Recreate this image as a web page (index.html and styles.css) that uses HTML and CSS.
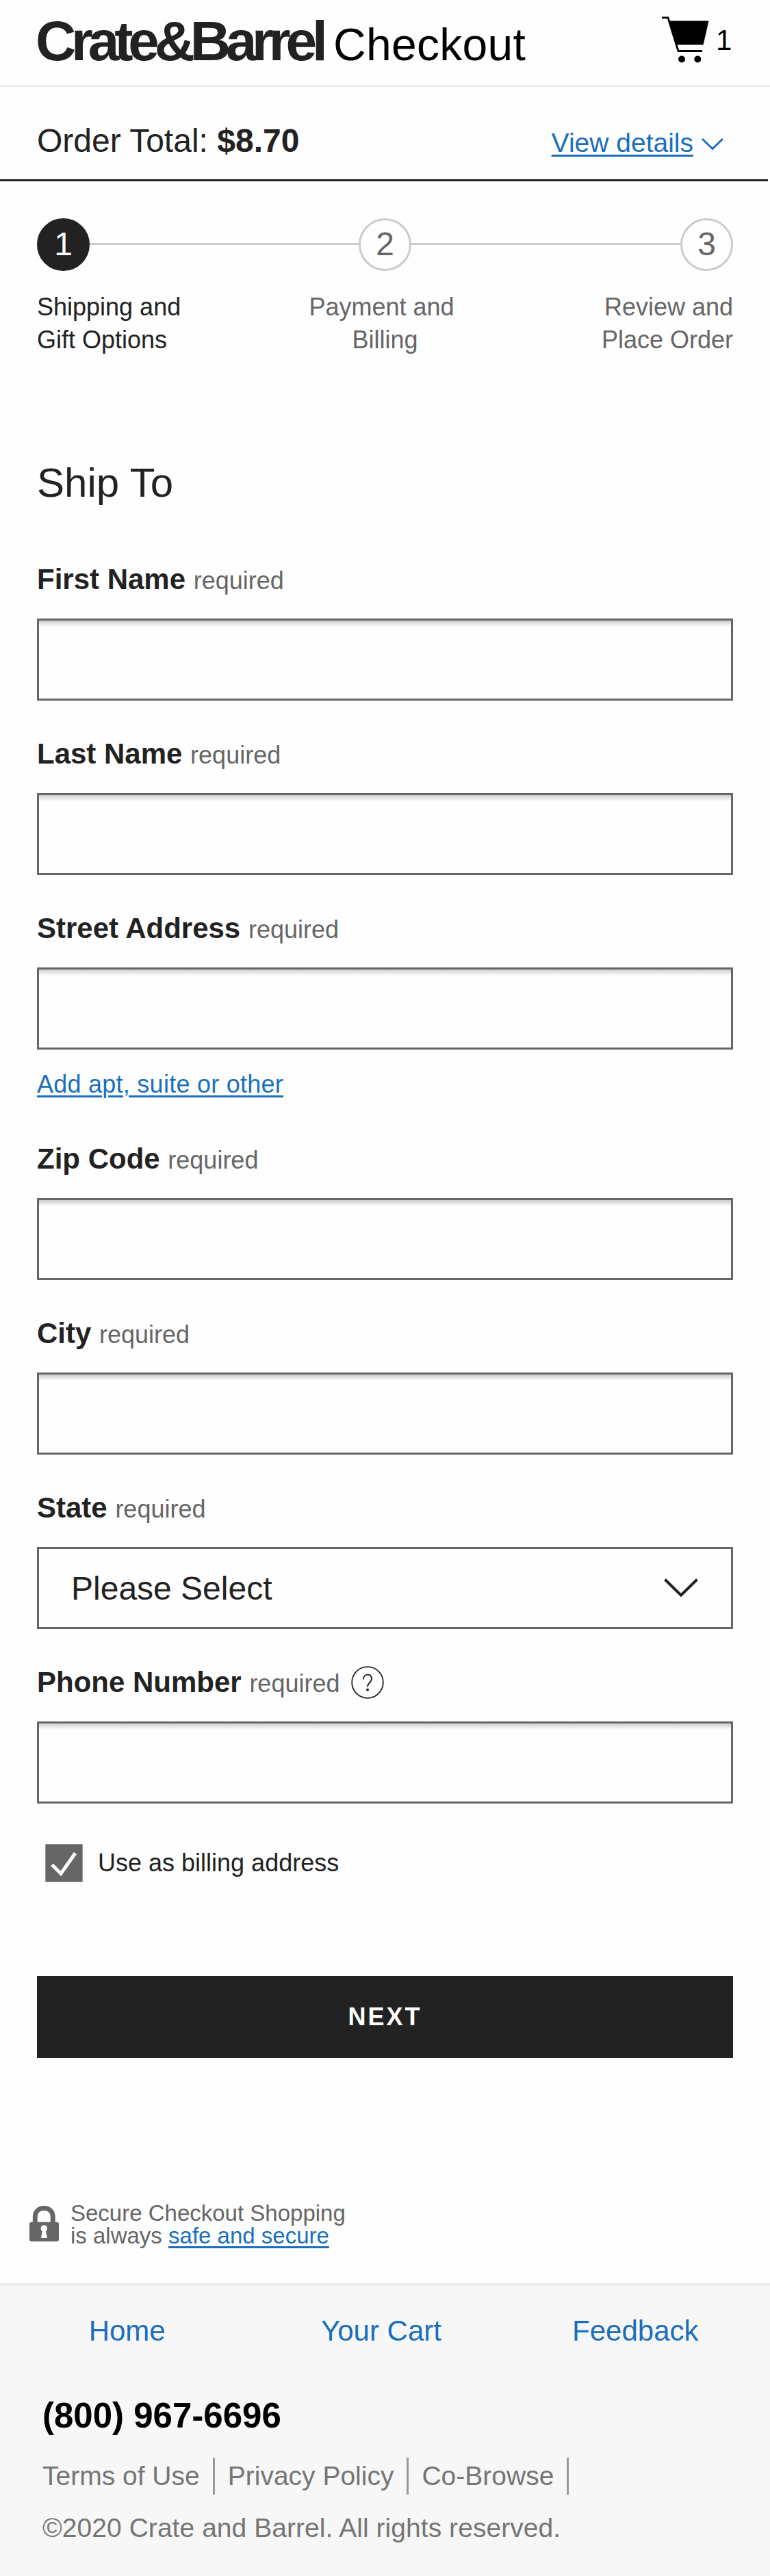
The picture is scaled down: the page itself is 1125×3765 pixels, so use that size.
FILE: index.html
```html
<!DOCTYPE html>
<html lang="en">
<head>
  <meta charset="UTF-8" />
  <meta name="viewport" content="width=device-width, initial-scale=1.0"/>
  <title>Checkout | Crate&amp;Barrel</title>
  <link rel="stylesheet" href="styles.css">
</head>
<body>
  <header class="header">
    <div class="brand">
      <span class="logo">Crate&amp;Barrel</span>
      <span class="brand-page">Checkout</span>
    </div>
    <div class="cart">
      <svg class="cart-icon" width="70" height="70" viewBox="0 0 70 70">
        <path d="M0 1.8 H9 L24 50.5 H59" fill="none" stroke="#000" stroke-width="2.8"/>
        <path d="M10.5 6.5 H68.5 L60.5 41.5 H21.5 Z" fill="#000"/>
        <circle cx="29" cy="62.5" r="5"/>
        <circle cx="52.3" cy="62.5" r="5"/>
      </svg>
      <span class="cart-count">1</span>
    </div>
  </header>

  <div class="order-total">
    <div>Order Total: <b>$8.70</b></div>
    <div class="details">
      <a href="#">View details</a>
      <svg class="details-arrow" width="32" height="18" viewBox="0 0 32 18">
        <path d="M1 1 L16 15.5 L31 1" fill="none" stroke="#1a6fbd" stroke-width="3"/>
      </svg>
    </div>
  </div>

  <div class="container">
    <div class="steps">
      <div class="circle active">1</div>
      <div class="line"></div>
      <div class="circle">2</div>
      <div class="line"></div>
      <div class="circle">3</div>
    </div>
    <div class="step-labels">
      <div class="active-label">Shipping and<br>Gift Options</div>
      <div class="center">Payment and&nbsp;<br>Billing</div>
      <div class="right">Review and<br>Place Order</div>
    </div>

    <h1>Ship To</h1>

    <form>
      <div class="field">
        <label for="firstName">First Name <span class="required">required</span></label>
        <input type="text" id="firstName" />
      </div>
      <div class="field">
        <label for="lastName">Last Name <span class="required">required</span></label>
        <input type="text" id="lastName" />
      </div>
      <div class="field street">
        <label for="street">Street Address <span class="required">required</span></label>
        <input type="text" id="street" />
        <a class="add-apt" href="#">Add apt, suite or other</a>
      </div>
      <div class="field">
        <label for="zip">Zip Code <span class="required">required</span></label>
        <input type="text" id="zip" />
      </div>
      <div class="field">
        <label for="city">City <span class="required">required</span></label>
        <input type="text" id="city" />
      </div>
      <div class="field">
        <label for="state">State <span class="required">required</span></label>
        <div class="select" id="state">
          <span>Please Select</span>
          <svg width="50" height="28" viewBox="0 0 50 28">
            <path d="M1.5 1.5 L25 24.5 L48.5 1.5" fill="none" stroke="#222" stroke-width="4"/>
          </svg>
        </div>
      </div>
      <div class="field">
        <label for="phone">Phone Number <span class="required">required</span><svg class="help" width="48" height="48" viewBox="0 0 48 48">
            <circle cx="24" cy="24" r="22.8" fill="none" stroke="#222" stroke-width="1.8"/>
            <path d="M18 19.500 C18 10.500 30 10.500 30 18.500 C30 24 24 24 24 30.500" fill="none" stroke="#222" stroke-width="2"/>
            <circle cx="24" cy="34.800" r="2" fill="#222"/>
          </svg></label>
        <input type="text" id="phone" />
      </div>

      <div class="billing">
        <svg width="56" height="56" viewBox="0 0 56 56">
          <rect x="0.500" y="0.500" width="54" height="55" fill="#666" stroke="#999" stroke-width="1"/>
          <path d="M10 30.500 L23 43.500 L44 13.500" fill="none" stroke="#fff" stroke-width="5"/>
        </svg>
        <span>Use as billing address</span>
      </div>

      <button type="button">NEXT</button>
    </form>
  </div>

  <div class="secure">
    <svg width="43" height="52" viewBox="0 0 43 52">
      <path d="M8.300 26 V16 C8.300 -1 34.200 -1 34.200 16 V26" fill="none" stroke="#666" stroke-width="7"/>
      <rect x="0" y="23.800" width="43" height="28.200" rx="3" fill="#666"/>
      <circle cx="21.300" cy="33" r="4.800" fill="#fff"/>
      <path d="M19.500 34 H23.200 L26 47 H17 Z" fill="#fff"/>
    </svg>
    <div>Secure Checkout Shopping<br>is always <a href="#">safe and secure</a></div>
  </div>

  <footer class="footer">
    <nav class="footer-nav">
      <a href="#">Home</a>
      <a href="#">Your Cart</a>
      <a href="#">Feedback</a>
    </nav>
    <div class="phone">(800) 967-6696</div>
    <div class="legal">
      <a href="#">Terms of Use</a>
      <a href="#">Privacy Policy</a>
      <a href="#">Co-Browse</a>
    </div>
    <div class="copyright">©2020 Crate and Barrel. All rights reserved.</div>
  </footer>
</body>
</html>
```

FILE: styles.css
```css
* {
  box-sizing: border-box;
}

body {
  margin: 0;
  font-family: 'Liberation Sans', Arial, sans-serif;
  font-size: 36px;
  color: #222;
  background: #fefefe;
}

a {
  color: #1a6fbd;
  text-decoration-thickness: 2.5px;
  text-underline-offset: 4px;
}

svg {
  display: block;
  flex: none;
}

/* header */
.header {
  display: flex;
  justify-content: space-between;
  height: 127px;
  padding: 13px 0 0 54px;
  border-bottom: 3px solid #f0eeec;
}

.brand {
  display: flex;
  align-items: baseline;
  height: 92px;
  line-height: 94px;
}

.logo {
  width: 435px;
  margin-left: -2px;
  font-size: 82px;
  font-weight: bold;
  letter-spacing: -7.2px;
  white-space: nowrap;
}

.brand-page {
  font-size: 66px;
  letter-spacing: 0.3px;
  color: #000;
}

.cart {
  display: flex;
  width: 158px;
  padding-top: 11px;
}

.cart-icon {
  margin-right: 9px;
}

.cart-count {
  margin-top: 10px;
  font-size: 42px;
  line-height: 50px;
  color: #000;
}

.order-total {
  display: flex;
  justify-content: space-between;
  align-items: baseline;
  width: 1122px;
  height: 138px;
  padding: 52px 65px 0 54px;
  border-bottom: 3px solid #222;
  font-size: 48px;
  line-height: 54px;
}

.details {
  display: flex;
  align-items: center;
  font-size: 39px;
}

.details-arrow {
  margin: 3px 0 0 12px;
}

/* progress steps */
.container {
  padding: 54px 54px 0;
}

.steps {
  display: flex;
  align-items: center;
}

.circle {
  width: 77px;
  height: 77px;
  border: 3px solid #ccc;
  border-radius: 50%;
  font-size: 48px;
  line-height: 69px;
  text-align: center;
  color: #666;
}

.circle.active {
  background: #222;
  border-color: #222;
  color: #fff;
}

.line {
  flex: 1;
  height: 3px;
  margin-top: -2px;
  background: #ccc;
}

.step-labels {
  display: grid;
  grid-template-columns: 1fr 1fr 1fr;
  margin-top: 29px;
  line-height: 48px;
  color: #666;
}

.active-label {
  color: #222;
}

.center {
  text-align: center;
}

.right {
  text-align: right;
}

h1 {
  margin: 149px 0 0;
  font-size: 60px;
  font-weight: normal;
  line-height: 72px;
}

/* form */
form {
  padding-top: 80px;
}

.field {
  height: 255px;
}

.field.street {
  height: 337px;
}

label {
  display: flex;
  align-items: baseline;
  height: 82px;
  font-size: 42px;
  font-weight: bold;
  line-height: 50px;
  white-space: pre;
}

.required {
  font-size: 36px;
  font-weight: normal;
  color: #666;
}

.help {
  margin: 1px 0 0 17px;
  align-self: flex-start;
}

input,
.select {
  display: block;
  width: 100%;
  height: 120px;
  border: 3px solid #666;
  border-radius: 0;
}

input {
  padding: 0 48px;
  font-size: 48px;
  background: linear-gradient(#ccc, #fefefe 9px);
}

.select {
  display: flex;
  justify-content: space-between;
  align-items: center;
  padding: 0 48px 0 47px;
  font-size: 48px;
}

.add-apt {
  display: inline-block;
  margin-top: 30px;
  line-height: 42px;
  letter-spacing: 0.25px;
}

.billing {
  display: flex;
  align-items: center;
  margin: 6px 0 137px 12px;
  height: 56px;
}

.billing span {
  margin-left: 21px;
}

button {
  display: block;
  width: 100%;
  height: 120px;
  border: none;
  background: #222;
  color: #fff;
  font: bold 36px 'Liberation Sans', Arial, sans-serif;
  letter-spacing: 3px;
}

.secure {
  display: flex;
  padding: 210px 0 0 43px;
  height: 329px;
  font-size: 33px;
  line-height: 33px;
  color: #666;
}

.secure svg {
  margin: 6px 17px 0 0;
}

/* footer */
.footer {
  height: 428px;
  padding: 41px 11px 0 0;
  border-top: 4px solid #eee;
  background: #f7f7f7;
}

.footer-nav {
  display: grid;
  grid-template-columns: 1fr 1fr 1fr;
  font-size: 42px;
  line-height: 50px;
  text-align: center;
}

.footer-nav a {
  text-decoration: none;
}

.phone {
  margin: 69px 0 0 62px;
  font-size: 51px;
  font-weight: bold;
  line-height: 60px;
  color: #000;
}

.legal {
  display: flex;
  margin: 31px 0 0 62px;
  font-size: 39px;
}

.legal a {
  margin-right: 19px;
  padding-right: 19px;
  border-right: 3px solid #999;
  line-height: 54px;
  color: #757575;
  text-decoration: none;
}

.copyright {
  margin: 22px 0 0 62px;
  font-size: 39px;
  line-height: 54px;
  letter-spacing: 0.05px;
  color: #757575;
}
```
